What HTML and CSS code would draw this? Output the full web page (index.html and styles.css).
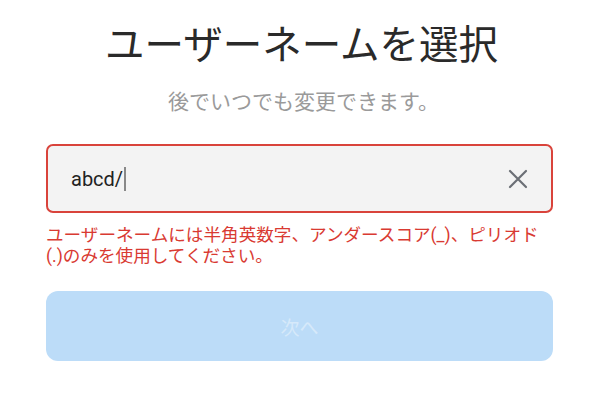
FILE: index.html
```html
<!DOCTYPE html>
<html lang="ja">
<head>
    <meta charset="UTF-8">
    <meta name="viewport" content="width=device-width, initial-scale=1.0">
    <title>ユーザーネームを選択</title>
    <link rel="stylesheet" href="styles.css">
</head>
<body>
    <div class="container">
        <h1 class="title">ユーザーネームを選択</h1>
        <p class="subtitle">後でいつでも変更できます。</p>
        <div class="field error-field">
            <div class="field-value">abcd/<span class="caret"></span></div>
            <button class="clear" aria-label="クリア">
                <svg width="22" height="22" viewBox="0 0 22 22">
                    <path d="M3 3 L19 19 M19 3 L3 19" stroke="#6b6f75" stroke-width="2.2" stroke-linecap="round" fill="none"/>
                </svg>
            </button>
        </div>
        <div class="error">ユーザーネームには半角英数字、アンダースコア(_)、ピリオド(.)のみを使用してください。</div>
        <button class="next" disabled>次へ</button>
    </div>
</body>
</html>
```

FILE: styles.css
```css
body {
    margin: 0;
    background-color: #fff;
    font-family: Roboto, "Noto Sans CJK JP", sans-serif;
}

.container {
    display: flex;
    flex-direction: column;
    padding: 12px 47px 0 46px;
}

.title {
    margin: 0;
    text-align: center;
    font-family: "Noto Sans CJK JP", sans-serif;
    font-size: 39.5px;
    font-weight: 400;
    line-height: 60px;
    color: #2a2a2a;
    padding-left: 4px;
}

.subtitle {
    margin: 14px 0 0;
    text-align: center;
    font-family: "Noto Sans CJK JP", sans-serif;
    font-size: 21px;
    line-height: 28px;
    color: #9a9a9a;
    padding-left: 8px;
}

.field {
    display: flex;
    align-items: center;
    height: 65px;
    margin-top: 30px;
    padding: 0 22px 0 23px;
    border: 2px solid #d9433b;
    border-radius: 7px;
    background-color: #f3f3f3;
}

.field-value {
    flex: 1;
    display: flex;
    align-items: center;
    font-size: 20px;
    color: #222;
}

.caret {
    display: inline-block;
    width: 1.5px;
    height: 24px;
    margin-left: 1px;
    background-color: #888;
}

.clear {
    display: flex;
    padding: 0;
    border: none;
    background: none;
}

.error {
    margin-top: 12px;
    font-size: 17.6px;
    line-height: 21px;
    color: #d93a32;
}

.next {
    height: 70px;
    margin-top: 24px;
    border: none;
    border-radius: 12px;
    background-color: #bcdcf8;
    color: #d6e9fa;
    font-family: "Noto Sans CJK JP", sans-serif;
    font-size: 19px;
}
```
